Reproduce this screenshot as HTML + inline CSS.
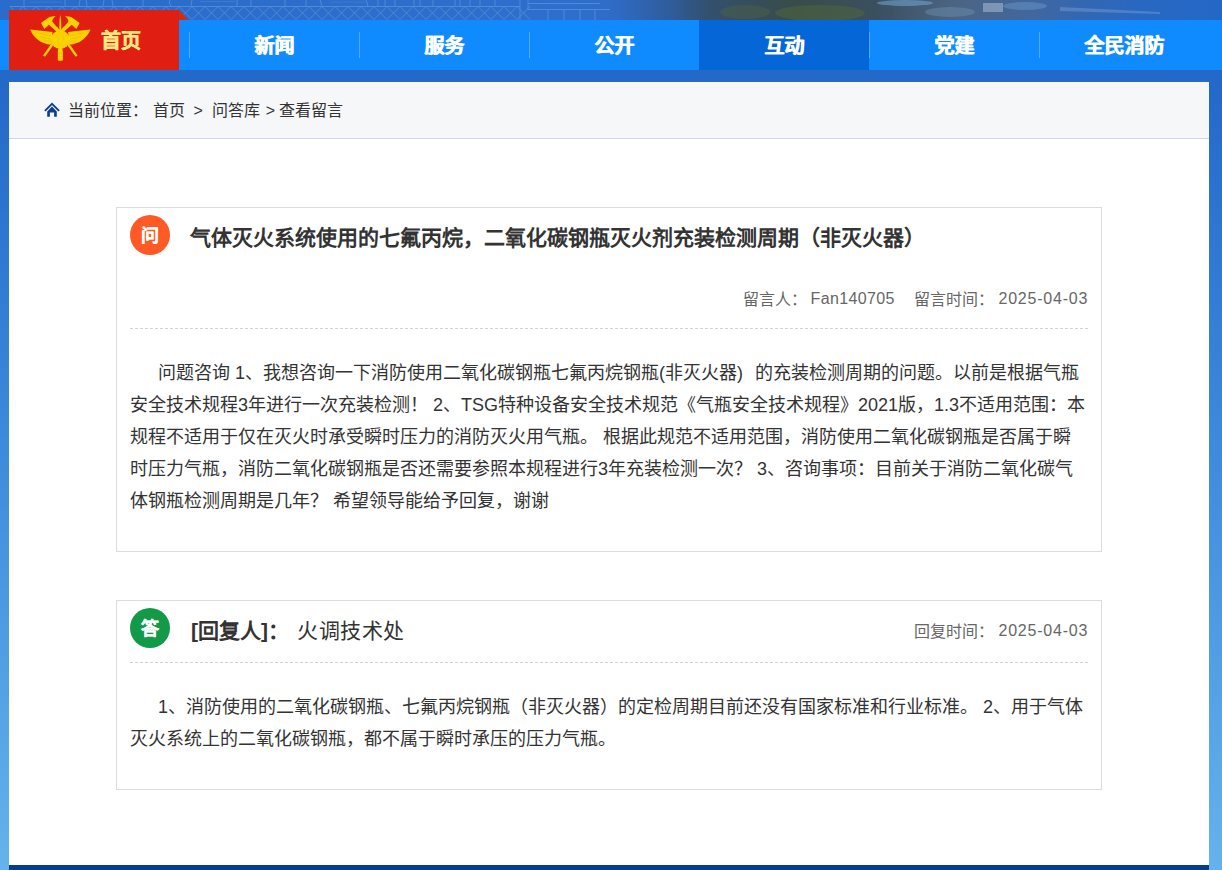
<!DOCTYPE html>
<html lang="zh-CN">
<head>
<meta charset="utf-8">
<style>
*{margin:0;padding:0;box-sizing:border-box;}
html,body{width:1222px;height:870px;overflow:hidden;}
body{position:relative;font-family:"Liberation Sans",sans-serif;background:linear-gradient(to bottom,#2467c7 0px,#2468c8 82px,#3a86d9 400px,#65b2ec 870px);color:#333;}
.abs{position:absolute;}
#top{left:0;top:0;width:1222px;height:20px;background:linear-gradient(to right,#2a6acb 0px,#2d6fcd 600px,#2f5d8e 680px,#3a5a5c 800px,#405e62 950px,#3b6190 1040px,#2a66c2 1120px,#2467c7 1222px);overflow:hidden;}
#nav{left:0;top:20px;width:1222px;height:50px;background:#0f8bff;}
#band{left:0;top:70px;width:1222px;height:12px;background:#2468c8;}
#red{left:9px;top:10px;width:170px;height:60px;background:#e01e12;}
#fold{left:179px;top:10px;width:0;height:0;border-left:10px solid #c9301c;border-top:10px solid transparent;}
.nv{position:absolute;top:21px;height:50px;width:170px;text-align:center;color:#fff;font-weight:bold;text-shadow:0.5px 0 0 #fff;font-size:20px;line-height:50px;}
.sep{position:absolute;top:32px;width:1px;height:26px;background:rgba(255,255,255,0.28);}
#home{left:101px;top:25px;font-size:20px;line-height:32px;color:#ffea84;font-weight:bold;-webkit-text-stroke:0.3px #ffea84;}
#wrap{left:9px;top:82px;width:1200px;height:783px;background:#fff;}
#crumb{left:9px;top:82px;width:1200px;height:57px;background:#f6f7f9;border-bottom:1px solid #c9d7ea;}
#crumbt{left:68px;top:99px;font-size:16px;line-height:24px;color:#333;white-space:nowrap;}
#foot{left:9px;top:865px;width:1200px;height:5px;background:#053e8a;}
.box{position:absolute;border:1px solid #dcdcdc;background:#fff;}
.circ{position:absolute;width:40px;height:40px;border-radius:50%;color:#fff;font-weight:bold;font-size:18px;line-height:42px;text-align:center;-webkit-text-stroke:0.3px #fff;}
.title{position:absolute;margin-top:1px;font-size:21px;font-weight:bold;color:#333;white-space:nowrap;line-height:30px;}
.meta{position:absolute;margin-top:2px;font-size:16px;color:#666;white-space:nowrap;line-height:24px;}
.dash{position:absolute;height:0;border-top:1px dashed #d2d2d2;}
.ln{position:absolute;left:130px;margin-top:2px;font-size:18px;line-height:32px;color:#333;white-space:nowrap;}
</style>
</head>
<body>
<svg id="top" class="abs" style="left:0;top:0" width="1222" height="20" viewBox="0 0 1222 20">
<defs>
<linearGradient id="tg" x1="0" x2="1" y1="0" y2="0">
<stop offset="0" stop-color="#2b6bca"/>
<stop offset="0.47" stop-color="#2e6ecc"/>
<stop offset="0.50" stop-color="#2f6cc8"/>
<stop offset="0.55" stop-color="#2f5c9a"/>
<stop offset="0.58" stop-color="#33506e"/>
<stop offset="0.65" stop-color="#384c4a"/>
<stop offset="0.72" stop-color="#3b5060"/>
<stop offset="0.78" stop-color="#4b6482"/>
<stop offset="0.84" stop-color="#43679c"/>
<stop offset="0.88" stop-color="#3567b0"/>
<stop offset="0.93" stop-color="#2868c2"/>
<stop offset="1" stop-color="#2468c6"/>
</linearGradient>
</defs>
<rect width="1222" height="20" fill="url(#tg)"/>
<g stroke="#5e95dd" stroke-width="0.9" fill="none" opacity="0.8">
<path d="M10,6.5 H520 M528,3.5 H600 M528,9.5 H610"/>
<path d="M10,6.5 L23,19.5 M23,6.5 L10,19.5 M23,6.5 L36,19.5 M36,6.5 L23,19.5 M36,6.5 L49,19.5 M49,6.5 L36,19.5 M49,6.5 L62,19.5 M62,6.5 L49,19.5 M62,6.5 L75,19.5 M75,6.5 L62,19.5 M75,6.5 L88,19.5 M88,6.5 L75,19.5 M88,6.5 L101,19.5 M101,6.5 L88,19.5 M101,6.5 L114,19.5 M114,6.5 L101,19.5 M114,6.5 L127,19.5 M127,6.5 L114,19.5 M127,6.5 L140,19.5 M140,6.5 L127,19.5 M140,6.5 L153,19.5 M153,6.5 L140,19.5 M153,6.5 L166,19.5 M166,6.5 L153,19.5 M166,6.5 L179,19.5 M179,6.5 L166,19.5 M179,6.5 L192,19.5 M192,6.5 L179,19.5 M192,6.5 L205,19.5 M205,6.5 L192,19.5 M205,6.5 L218,19.5 M218,6.5 L205,19.5 M218,6.5 L231,19.5 M231,6.5 L218,19.5 M231,6.5 L244,19.5 M244,6.5 L231,19.5 M244,6.5 L257,19.5 M257,6.5 L244,19.5 M257,6.5 L270,19.5 M270,6.5 L257,19.5 M270,6.5 L283,19.5 M283,6.5 L270,19.5 M283,6.5 L296,19.5 M296,6.5 L283,19.5 M296,6.5 L309,19.5 M309,6.5 L296,19.5 M309,6.5 L322,19.5 M322,6.5 L309,19.5 M322,6.5 L335,19.5 M335,6.5 L322,19.5 M335,6.5 L348,19.5 M348,6.5 L335,19.5 M348,6.5 L361,19.5 M361,6.5 L348,19.5 M361,6.5 L374,19.5 M374,6.5 L361,19.5 M374,6.5 L387,19.5 M387,6.5 L374,19.5 M387,6.5 L400,19.5 M400,6.5 L387,19.5 M400,6.5 L413,19.5 M413,6.5 L400,19.5 M413,6.5 L426,19.5 M426,6.5 L413,19.5 M426,6.5 L439,19.5 M439,6.5 L426,19.5 M439,6.5 L452,19.5 M452,6.5 L439,19.5 M452,6.5 L465,19.5 M465,6.5 L452,19.5 M465,6.5 L478,19.5 M478,6.5 L465,19.5 M478,6.5 L491,19.5 M491,6.5 L478,19.5 M491,6.5 L504,19.5 M504,6.5 L491,19.5 M504,6.5 L517,19.5 M517,6.5 L504,19.5 M517,6.5 L530,19.5 M530,6.5 L517,19.5"/>
<path d="M24,0 V6 M65,0 V6 M80,0 L79,6 M86,0 L87,6 M104,0 L103,6 M112,0 L113,6 M143,0 V6 M170,0 Q168,3 171,6 M192,0 L191,6 M237,0 V6 M251,0 V6 M285,0 V6 M306,0 V6 M320,0 L322,6 M366,0 L368,6 M378,0 V6 M385,0 V6 M395,0 V6 M414,0 V6 M420,0 V6 M433,0 V6 M455,0 V6 M460,0 V6 M470,0 V6 M480,0 V6 M495,0 V6 M520,0 V20 M528,0 V10 M548,10 V20 M564,10 V20 M580,10 V20 M595,10 V20"/>
<path d="M30,2 H62 M200,1.5 H235 M330,2 H365" opacity="0.5"/>
</g>
<g opacity="0.45">
<ellipse cx="820" cy="13" rx="45" ry="8" fill="#556a38"/>
<ellipse cx="745" cy="12" rx="25" ry="7" fill="#4e6248"/>
<ellipse cx="905" cy="3" rx="28" ry="3" fill="#7fb8e8"/>
<ellipse cx="950" cy="12" rx="25" ry="5" fill="#6f90b0"/>
<rect x="983" y="3" width="20" height="9" fill="#c0d0e4"/>
<ellipse cx="1025" cy="6" rx="22" ry="4" fill="#6a9ccc"/>
<path d="M1060,7 L1160,12 L1160,14 L1060,11 Z" fill="#7aa0d0"/>
</g>
</svg>
<div id="nav" class="abs"></div>
<div id="band" class="abs"></div>
<div id="red" class="abs"></div>
<div id="fold" class="abs"></div>
<div id="home" class="abs">首页</div>
<svg class="abs" style="left:25px;top:10px" width="70" height="60" viewBox="25 10 70 60">
<g fill="#fbd200">
<path d="M41,23.1 L48.9,17.3 Q52,16 55.7,16.2 Q52.2,18.5 52.2,21.5 L58.8,29.5 L56.4,31.5 L48.9,24.7 L44.3,29 Z"/>
<path d="M79.6,23.1 L71.7,17.3 Q68.6,16 64.9,16.2 Q68.4,18.5 68.4,21.5 L61.8,29.5 L64.2,31.5 L71.7,24.7 L76.3,29 Z"/>
<path d="M55,28 L57,26.6 L77.6,55.4 L75.6,56.8 Z"/>
<path d="M65.6,28 L63.6,26.6 L43,55.4 L45,56.8 Z"/>
<path d="M60.3,14.8 L61.1,20 L61.3,31 L59.3,31 L59.5,20 Z"/>
<path d="M30.2,29.6 Q42,31 52.5,32 L51.5,44.8 Q43,44 37.5,39.5 Q32,35 30.2,29.6 Z"/>
<path d="M90.4,29.6 Q78.6,31 68.1,32 L69.1,44.8 Q77.6,44 83.1,39.5 Q88.6,35 90.4,29.6 Z"/>
<circle cx="60.3" cy="39.7" r="9.4"/>
<path d="M58.2,48.3 H62.4 L62.9,52 V59.6 Q62.9,60.8 61.7,60.8 H59 Q57.8,60.8 57.8,59.6 V52 Z"/>
</g>
<g fill="none" stroke="#d9a800" stroke-width="0.5" opacity="0.7">
<path d="M36,32.5 Q44,35 51,35.5 M39,36 Q45,38.5 51,39 M43,39.8 Q47,41 51,41.8"/>
<path d="M84.6,32.5 Q76.6,35 69.6,35.5 M81.6,36 Q75.6,38.5 69.6,39 M77.6,39.8 Q73.6,41 69.6,41.8"/>
<path d="M57.5,33.5 L60,32.5 L62.5,34.5 L63.5,38 L62,42.5 L59.5,45 L57.5,43 L58.5,39.5 L56.5,36.5 Z" opacity="0.6"/>
<path d="M57.8,53.5 H62.8 M57.8,56.5 H62.8"/>
</g>
</svg>

<div class="sep" style="left:189px"></div>
<div class="sep" style="left:359px"></div>
<div class="sep" style="left:529px"></div>
<div class="sep" style="left:1039px"></div>
<div class="sep" style="left:869px;z-index:2"></div>
<div class="abs" style="left:699px;top:20px;width:170px;height:50px;background:#0566d8"></div>
<div class="nv" style="left:189px">新闻</div>
<div class="nv" style="left:359px">服务</div>
<div class="nv" style="left:529px">公开</div>
<div class="nv" style="left:699px">互动</div>
<div class="nv" style="left:869px">党建</div>
<div class="nv" style="left:1039px">全民消防</div>

<div id="wrap" class="abs"></div>
<div id="crumb" class="abs"></div>
<svg class="abs" style="left:44px;top:102px" width="16" height="16" viewBox="44 102 16 16">
<path d="M45.4,110.4 L52,103.8 L58.6,110.4" fill="none" stroke="#0b3f8e" stroke-width="1.8" stroke-linecap="round" stroke-linejoin="miter"/>
<path d="M47.2,111.4 L52,106.6 L56.8,111.4 L56.8,116.8 L54.1,116.8 L54.1,112.4 L49.9,112.4 L49.9,116.8 L47.2,116.8 Z" fill="#0b3f8e"/>
</svg>
<div id="crumbt" class="abs">当前位置：<span style="margin-left:5px">首页</span> <span style="margin:0 5px 0 4px">&gt;</span> 问答库<span style="margin-left:1px"> &gt; </span>查看留言</div>

<div class="box" style="left:116px;top:207px;width:986px;height:345px;"></div>
<div class="circ" style="left:130px;top:215px;background:#fe5a26">问</div>
<div class="title" style="left:190px;top:222px">气体灭火系统使用的七氟丙烷，二氧化碳钢瓶灭火剂充装检测周期（非灭火器）</div>
<div class="meta" style="left:743px;top:286px">留言人：</div><div class="meta" style="left:810.5px;top:286px;letter-spacing:0.38px;margin-top:1px">Fan140705</div>
<div class="meta" style="left:914px;top:286px">留言时间：</div><div class="meta" style="left:998.5px;top:286px;letter-spacing:0.78px;margin-top:1px">2025-04-03</div>
<div class="dash" style="left:130px;top:328px;width:958px"></div>
<div class="ln" style="top:355px;left:158px">问题咨询 1、我想咨询一下消防使用二氧化碳钢瓶七氟丙烷钢瓶(非灭火器)<span style="margin-left:7px"> </span>的充装检测周期的问题。以前是根据气瓶</div>
<div class="ln" style="top:387px">安全技术规程3年进行一次充装检测！ 2、TSG特种设备安全技术规范《气瓶安全技术规程》2021版，1.3不适用范围：本</div>
<div class="ln" style="top:419px">规程不适用于仅在灭火时承受瞬时压力的消防灭火用气瓶。 根据此规范不适用范围，消防使用二氧化碳钢瓶是否属于瞬</div>
<div class="ln" style="top:451px">时压力气瓶，消防二氧化碳钢瓶是否还需要参照本规程进行3年充装检测一次？ 3、咨询事项：目前关于消防二氧化碳气</div>
<div class="ln" style="top:483px">体钢瓶检测周期是几年？ 希望领导能给予回复，谢谢</div>

<div class="box" style="left:116px;top:600px;width:986px;height:190px;"></div>
<div class="circ" style="left:130px;top:608px;background:#129a48">答</div>
<div class="title" style="left:191px;top:615px">[回复人]：<span style="font-weight:normal;margin-left:8px;letter-spacing:0.5px">火调技术处</span></div>
<div class="meta" style="left:914px;top:618px">回复时间：</div><div class="meta" style="left:998.5px;top:618px;letter-spacing:0.78px;margin-top:1px">2025-04-03</div>
<div class="dash" style="left:130px;top:662px;width:958px"></div>
<div class="ln" style="top:689px;left:158px">1、消防使用的二氧化碳钢瓶、七氟丙烷钢瓶（非灭火器）的定检周期目前还没有国家标准和行业标准。 2、用于气体</div>
<div class="ln" style="top:721px">灭火系统上的二氧化碳钢瓶，都不属于瞬时承压的压力气瓶。</div>

<div id="foot" class="abs"></div>
</body>
</html>
